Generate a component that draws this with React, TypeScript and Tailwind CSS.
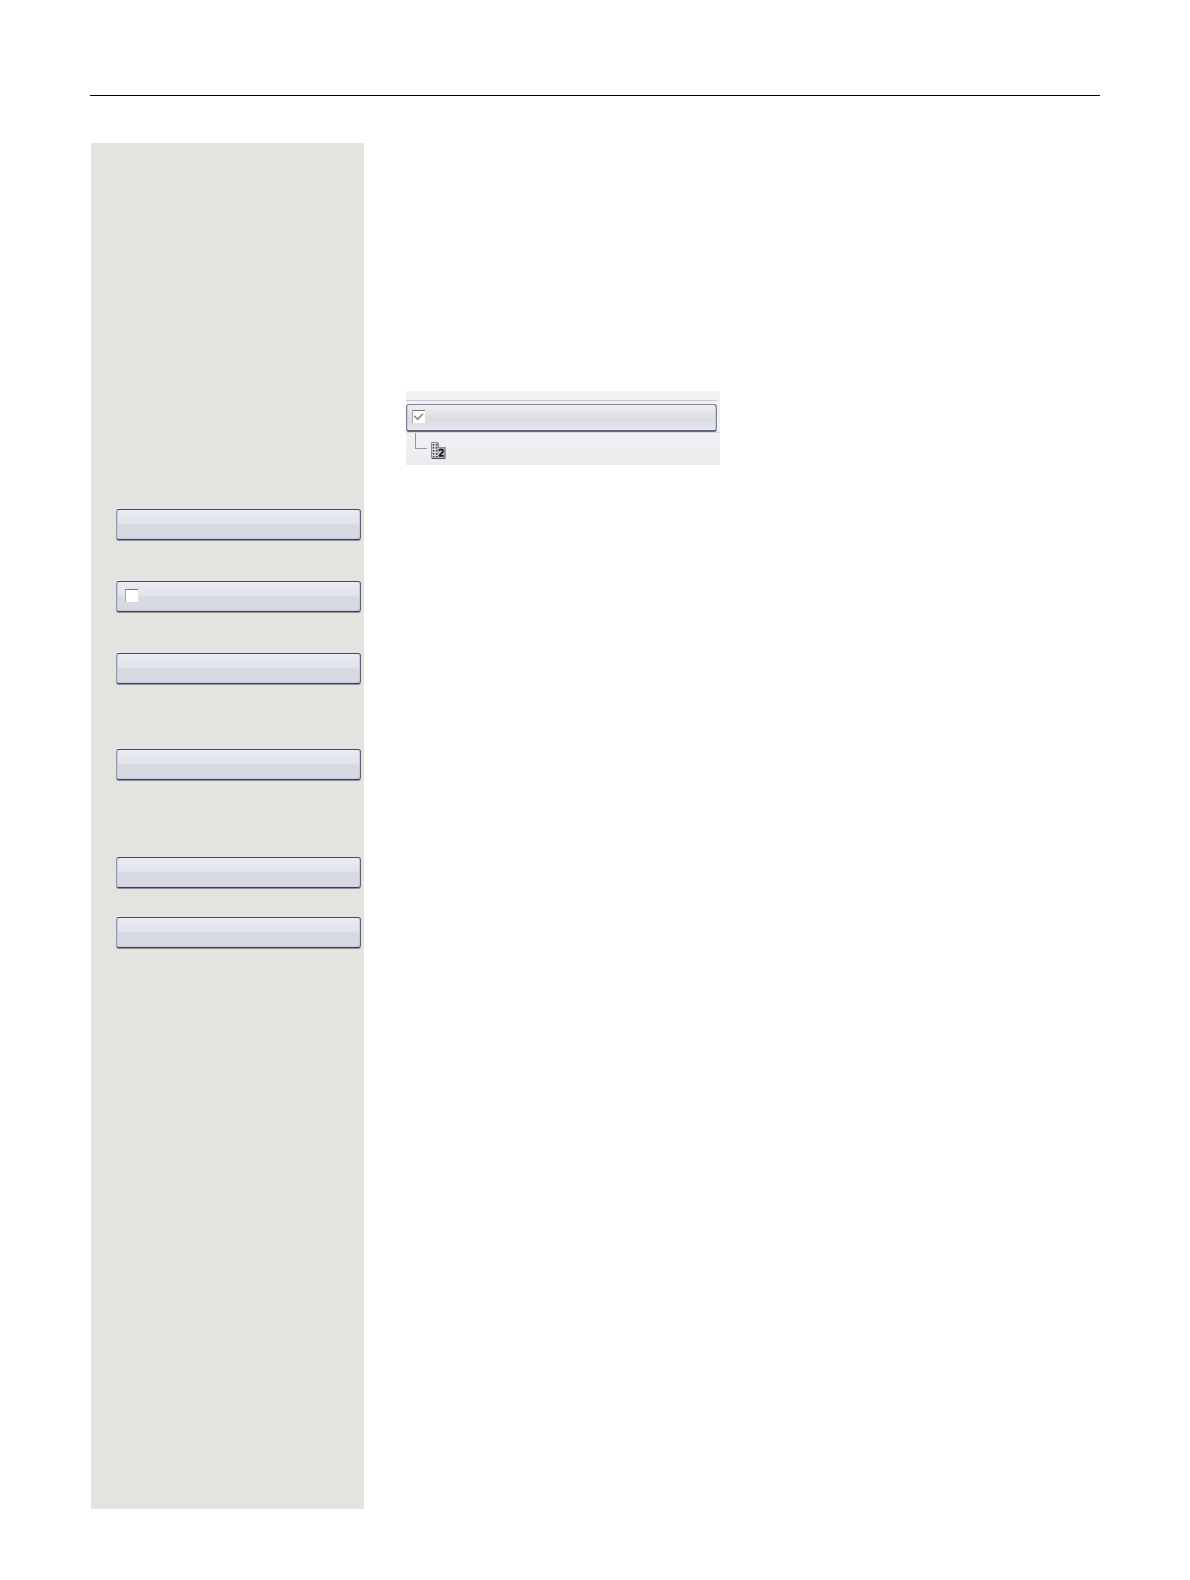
import React, { useState } from 'react';
import clsx from 'clsx';

interface KeyProps {
  label: string;
  className?: string;
}

const keyStyle =
  'h-[31px] w-full rounded-[3px] border border-t-[#454961] border-b-[#3c3e5a] border-l-[#9496b4] border-r-[#5b5e80] bg-linear-to-b from-[#ebecf2] from-0% via-[#e1e3eb] via-48% to-[#d6d8e2] to-52% shadow-[inset_1px_0_0_#cbcbdd,inset_-1px_-1px_0_#c8c8de,0_1px_0_#8f919c]';

const DisplayKey: React.FC<KeyProps> = ({ label, className }) => (
  <button type="button" aria-label={label} className={clsx(keyStyle, 'block cursor-pointer', className)} />
);

interface TickBoxProps {
  label: string;
  checked: boolean;
  onChange: () => void;
}

const TickBox: React.FC<TickBoxProps> = ({ label, checked, onChange }) => (
  <span className="grid h-[13px] w-[13px] shrink-0">
    <input
      type="checkbox"
      aria-label={label}
      checked={checked}
      onChange={onChange}
      className="col-start-1 row-start-1 h-[13px] w-[13px] cursor-pointer appearance-none border-t border-l border-t-[#77777b] border-l-[#a7a7ab] bg-white"
    />
    {checked && (
      <svg viewBox="0 0 13 13" className="pointer-events-none col-start-1 row-start-1 h-[13px] w-[13px]">
        <path d="M2.2 5.8 5.6 9.2 11 3.8" fill="none" stroke="#929296" strokeWidth="1.7" />
      </svg>
    )}
  </span>
);

// Keypad with a small "2" tab on its lower right
const KeypadIcon: React.FC = () => (
  <svg viewBox="0 0 15 17" className="h-[17px] w-[15px]" aria-hidden="true">
    <path d="M0.5 0.5H7V16H0.5Z" fill="#d6d6da" stroke="#8b8b90" />
    <path d="M2.5 2V15M5.5 2V15" stroke="#38383d" strokeWidth="1.4" strokeDasharray="1.5 1.5" />
    <path d="M7 5H13.5V16H7Z" fill="#bebec3" />
    <path d="M7 5.5H13.5M7.5 1V5" stroke="#8c8c91" fill="none" />
    <path d="M14 5V16.5H1" stroke="#4a4a50" fill="none" />
    <path d="M8.2 8.9C8.4 7 12 6.8 12 9C12 10.8 9 11.8 8.6 13.8H12.8" stroke="#1c1c21" fill="none" strokeWidth="1.8" />
  </svg>
);

const App: React.FC = () => {
  const [lineActive, setLineActive] = useState(false);
  const [entryActive, setEntryActive] = useState(true);

  return (
    <div className="flex min-h-screen flex-col bg-white px-[90px] pt-[95px] pb-[71px]">
      <hr className="border-t border-black" />

      <div className="mt-[47px] ml-px flex flex-1 items-stretch">
        <aside className="w-[273px] shrink-0 bg-[#e3e4df] pt-[366px] pr-[3px] pb-8 pl-[25px]">
          <DisplayKey label="Key 1" />
          <div className={clsx(keyStyle, 'mt-[41px] flex items-start px-2 pt-[7px]')}>
            <TickBox label="Key 2" checked={lineActive} onChange={() => setLineActive(!lineActive)} />
          </div>
          <DisplayKey label="Key 3" className="mt-[41px]" />
          <DisplayKey label="Key 4" className="mt-[65px]" />
          <DisplayKey label="Key 5" className="mt-[77px]" />
          <DisplayKey label="Key 6" className="mt-[29px]" />
        </aside>

        <main className="min-w-0 flex-1 pt-[248px] pl-[42px]">
          <section className="w-[314px] max-w-full bg-[#f0f1f3]">
            <div className="mr-[3px] h-[10px] border-b border-[#c6c9da] bg-[#f0f1f1]" />
            <div className="mt-[3px] mr-[3px] flex h-7 items-start rounded-[3px] border border-b-2 border-[#7e81a0] border-b-[#626480] bg-linear-to-b from-[#efeff2] from-0% via-[#dadbdf] via-60% to-[#e8e8ef] to-100% px-[5px] pt-[5px] shadow-[inset_1px_0_0_#c9cada,inset_-1px_0_0_#c9cada]">
              <TickBox label="Entry" checked={entryActive} onChange={() => setEntryActive(!entryActive)} />
            </div>
            <div className="border-t border-[#d7d9e5] bg-linear-to-b from-[#f0f1f3] to-[#ebecee]">
              <div className="flex h-8 items-start pl-[9px]">
                <div className="h-4 w-3 border-b border-l border-[#94979f]" />
                <div className="mt-[9px] ml-1">
                  <KeypadIcon />
                </div>
              </div>
            </div>
          </section>
        </main>
      </div>
    </div>
  );
};

export default App;
